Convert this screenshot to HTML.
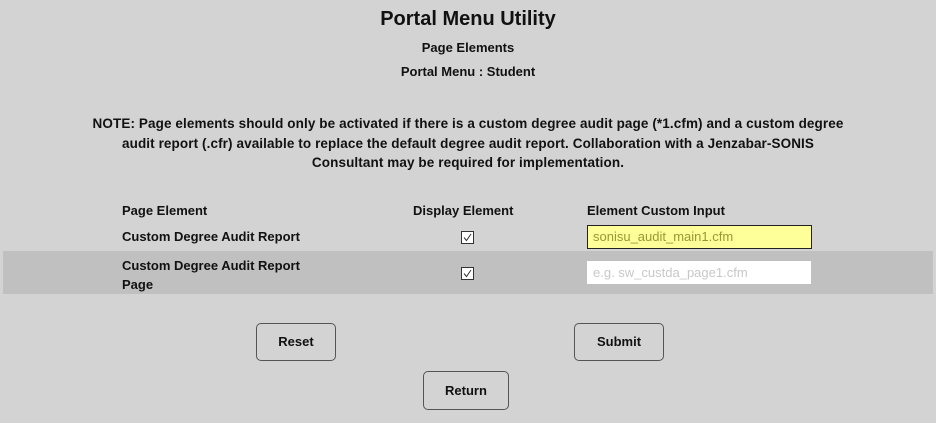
<!DOCTYPE html>
<html><head><meta charset="utf-8"><style>
body{margin:0;width:936px;height:423px;background:#d3d3d3;font-family:"Liberation Sans",sans-serif;color:#111;position:relative;overflow:hidden}
.a{position:absolute;white-space:nowrap}
.c{left:0;width:936px;text-align:center}
.cb{position:absolute;width:11px;height:11px;border:1px solid #333;background:#fff}
.cb svg{position:absolute;left:0;top:0}
.btn{position:absolute;border:1px solid #555;border-radius:5px;background:#d3d3d3;font-weight:bold;font-size:13px;text-align:center;box-sizing:border-box}
</style></head><body>
<div class="a c" style="top:8px;font-size:20px;font-weight:bold">Portal Menu Utility</div>
<div class="a c" style="top:40px;font-size:13px;font-weight:bold">Page Elements</div>
<div class="a c" style="top:64px;font-size:13px;font-weight:bold">Portal Menu : Student</div>
<div class="a c" style="top:114px;font-size:13.5px;font-weight:bold;line-height:19.5px;letter-spacing:0.1px">NOTE: Page elements should only be activated if there is a custom degree audit page (*1.cfm) and a custom degree<br>audit report (.cfr) available to replace the default degree audit report. Collaboration with a Jenzabar-SONIS<br>Consultant may be required for implementation.</div>
<div class="a" style="left:122px;top:203px;font-size:13px;font-weight:bold">Page Element</div>
<div class="a" style="left:413px;top:203px;font-size:13px;font-weight:bold">Display Element</div>
<div class="a" style="left:587px;top:203px;font-size:13px;font-weight:bold">Element Custom Input</div>
<div class="a" style="left:122px;top:229px;font-size:13px;font-weight:bold">Custom Degree Audit Report</div>
<div class="cb" style="left:461px;top:231px"><svg width="11" height="11"><path d="M2 5.5L4.5 8.5L9 2" stroke="#333" fill="none" stroke-width="1"/></svg></div>
<div class="a" style="left:587px;top:225px;width:223px;height:22px;background:#ffff99;border:1px solid #222;font-size:13px;color:#999933;line-height:22px;text-indent:5px">sonisu_audit_main1.cfm</div>
<div class="a" style="left:3px;top:251px;width:930px;height:43px;background:#c0c0c0"></div>
<div class="a" style="left:122px;top:256px;font-size:13px;font-weight:bold;line-height:19px">Custom Degree Audit Report<br>Page</div>
<div class="cb" style="left:461px;top:267px"><svg width="11" height="11"><path d="M2 5.5L4.5 8.5L9 2" stroke="#333" fill="none" stroke-width="1"/></svg></div>
<div class="a" style="left:587px;top:261px;width:224px;height:23px;background:#fff;font-size:13px;color:#c8c8c8;line-height:23px;text-indent:6px">e.g. sw_custda_page1.cfm</div>
<div class="btn" style="left:256px;top:323px;width:80px;height:38px;line-height:36px">Reset</div>
<div class="btn" style="left:574px;top:323px;width:90px;height:38px;line-height:36px">Submit</div>
<div class="btn" style="left:423px;top:371px;width:86px;height:39px;line-height:37px">Return</div>
</body></html>
